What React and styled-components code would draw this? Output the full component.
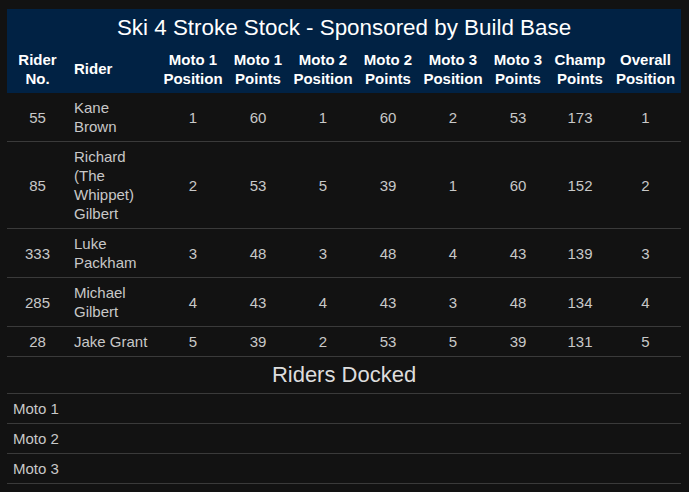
import React from 'react';
import styled, { createGlobalStyle } from 'styled-components';

const GlobalStyle = createGlobalStyle`
  body {
    margin: 0;
    background-color: #121212;
    font-family: "Liberation Sans", Arial, sans-serif;
  }
`;

const columns = [
  { label: ['Rider', 'No.'], width: 61 },
  { label: ['Rider'], width: 92, left: true },
  { label: ['Moto 1', 'Position'], width: 66 },
  { label: ['Moto 1', 'Points'], width: 64 },
  { label: ['Moto 2', 'Position'], width: 66 },
  { label: ['Moto 2', 'Points'], width: 64 },
  { label: ['Moto 3', 'Position'], width: 66 },
  { label: ['Moto 3', 'Points'], width: 64 },
  { label: ['Champ', 'Points'], width: 60 },
  { label: ['Overall', 'Position'], width: 71 },
];

const riders = [
  { no: 55, name: 'Kane Brown', res: [1, 60, 1, 60, 2, 53, 173, 1] },
  { no: 85, name: 'Richard (The Whippet) Gilbert', res: [2, 53, 5, 39, 1, 60, 152, 2] },
  { no: 333, name: 'Luke Packham', res: [3, 48, 3, 48, 4, 43, 139, 3] },
  { no: 285, name: 'Michael Gilbert', res: [4, 43, 4, 43, 3, 48, 134, 4] },
  { no: 28, name: 'Jake Grant', res: [5, 39, 2, 53, 5, 39, 131, 5] },
];

const docked = ['Moto 1', 'Moto 2', 'Moto 3'];

const App = () => {
  return (
    <Page>
      <GlobalStyle />
      <Results>
        <colgroup>
          {columns.map((c, i) => (
            <col key={i} style={{ width: c.width }} />
          ))}
        </colgroup>
        <thead>
          <tr>
            <Title colSpan={columns.length}>Ski 4 Stroke Stock - Sponsored by Build Base</Title>
          </tr>
          <tr>
            {columns.map((c, i) => (
              <HeadCell key={i} $left={c.left}>
                {c.label.map((l, j) => (
                  <div key={j}>{l}</div>
                ))}
              </HeadCell>
            ))}
          </tr>
        </thead>
        <tbody>
          {riders.map((r) => (
            <Row key={r.no}>
              <Cell>{r.no}</Cell>
              <NameCell>{r.name}</NameCell>
              {r.res.map((v, i) => (
                <Cell key={i}>{v}</Cell>
              ))}
            </Row>
          ))}
          <Row>
            <SectionTitle colSpan={columns.length}>Riders Docked</SectionTitle>
          </Row>
          {docked.map((m) => (
            <Row key={m}>
              <DockCell colSpan={columns.length}>{m}</DockCell>
            </Row>
          ))}
        </tbody>
      </Results>
    </Page>
  );
};

export default App;

const Page = styled.div`
  padding: 9px 8px 0 7px;
`;

const Results = styled.table`
  width: 674px;
  table-layout: fixed;
  border-collapse: collapse;
  font-size: 15px;
  line-height: 19px;
  color: #c8c8c8;
`;

const Title = styled.th`
  background-color: #012244;
  color: #ffffff;
  font-size: 22.4px;
  font-weight: normal;
  line-height: 27px;
  padding: 5px 0;
  text-align: center;
`;

const HeadCell = styled.th`
  background-color: #012244;
  color: #ffffff;
  font-weight: bold;
  line-height: 18.5px;
  padding: 5px 3px 5px ${(p) => (p.$left ? '6px' : '3px')};
  text-align: ${(p) => (p.$left ? 'left' : 'center')};
  vertical-align: middle;
  white-space: nowrap;
`;

const Row = styled.tr`
  border-bottom: 1px solid #3a3a3a;
`;

const Cell = styled.td`
  padding: 5px 3px;
  text-align: center;
  vertical-align: middle;
`;

const NameCell = styled.td`
  padding: 5px 12px 5px 6px;
  text-align: left;
  vertical-align: middle;
`;

const SectionTitle = styled.td`
  font-size: 22px;
  line-height: 26px;
  color: #dddddd;
  text-align: center;
  padding: 5px 0;
`;

const DockCell = styled.td`
  padding: 5px 6px;
  text-align: left;
`;
